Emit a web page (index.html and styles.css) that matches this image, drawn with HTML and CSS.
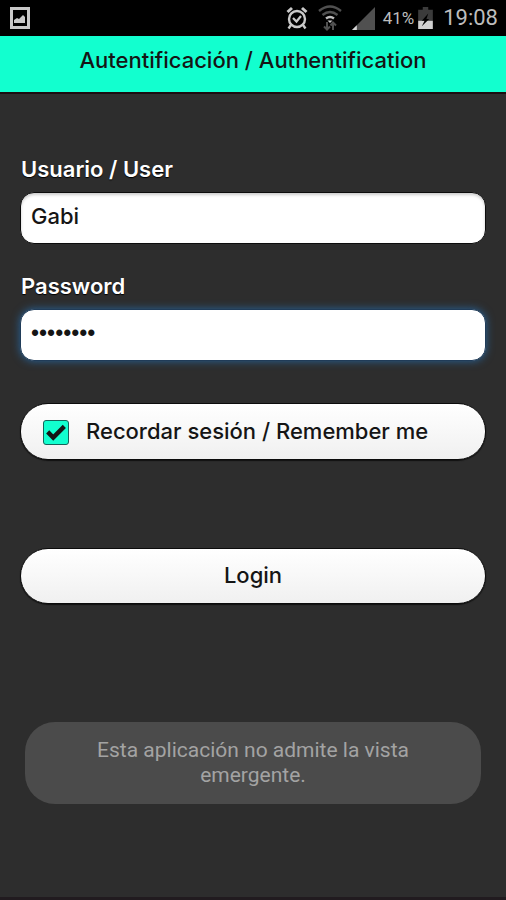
FILE: index.html
```html
<!DOCTYPE html>
<html lang="es">
<head>
<meta charset="utf-8">
<meta name="viewport" content="width=device-width, initial-scale=1">
<title>Autentificación / Authentification</title>
<link rel="stylesheet" href="styles.css">
</head>
<body>
<div class="statusbar">
  <svg class="icon-picture" width="20" height="22" viewBox="0 0 20 22" aria-hidden="true">
    <path fill="#c9c9c9" fill-rule="evenodd" d="M0 0h20v22H0zM3 3v16h14V3z"/>
    <path fill="#c9c9c9" d="M4 16v-3l3-2 2 1 4-4 2 2v6z"/>
  </svg>
  <div class="indicators">
    <svg width="22" height="24" viewBox="0 0 22 24" fill="none" stroke="#c9c9c9" aria-hidden="true">
      <circle cx="11" cy="13" r="8" stroke-width="2.4"/>
      <path stroke-width="2.2" d="M7 12l3.500 3.500L15 10"/>
      <path stroke-width="3" d="M1.500 6L6 2M16 2l4.500 4"/>
      <path stroke-width="2.400" d="M5 19l-2.500 3.500M17 19l2.500 3.500"/>
    </svg>
    <svg width="24" height="26" viewBox="0 0 24 26" fill="none" stroke="#505050" aria-hidden="true">
      <path stroke-width="2.400" d="M1 6Q12-3 23 6"/>
      <path stroke-width="2.400" d="M4.500 10Q12 4 19.500 10"/>
      <path stroke="#bbb" stroke-width="2.400" d="M8 13.500q4-3 8 0"/>
      <path fill="#c9c9c9" stroke="none" d="M9.500 15.500h5L12 18z"/>
      <path stroke-width="2" d="M9 17v8M6 21.500l3 3 3-3M15 25v-8M12.500 20.500L15 17.500l3 3"/>
    </svg>
    <svg width="23" height="23" viewBox="0 0 24 24" aria-hidden="true">
      <path fill="#505050" d="M24 0v24H0z"/>
      <path fill="#d8d8d8" d="M5 19v5H0z"/>
    </svg>
    <span class="battery">
      <span class="percent">41%</span>
      <svg width="15" height="22" viewBox="0 0 16 24" aria-hidden="true">
        <path fill="#3b3b3b" d="M5 0h6v3h5v12H0V3h5z"/>
        <path fill="#d0d0d0" d="M0 15h16v9H0z"/>
        <path fill="#000" d="M11 7l-7 8h3l-3 6 8-8H9z"/>
      </svg>
    </span>
    <span class="clock">19:08</span>
  </div>
</div>
<header class="titlebar"><h1>Autentificación / Authentification</h1></header>
<main>
  <form class="login">
    <label class="caption" for="user">Usuario / User</label>
    <input class="field" id="user" type="text" value="Gabi">
    <label class="caption" for="password">Password</label>
    <input class="field field-active" id="password" type="password" value="12345678">
    <label class="pill remember">
      <span class="tick">
        <input type="checkbox" checked>
        <svg width="20" height="17" viewBox="0 0 18 15" fill="none" stroke="#151515" stroke-width="4" aria-hidden="true"><path d="M1.500 7l5 5L16.500 2"/></svg>
      </span>
      <span>Recordar sesión / Remember me</span>
    </label>
    <button class="pill submit" type="button">Login</button>
  </form>
  <div class="toast" role="status">Esta aplicación no admite la vista emergente.</div>
</main>
</body>
</html>
```
FILE: styles.css
```css
* {
  box-sizing: border-box;
}

body {
  margin: 0;
  min-height: 100vh;
  display: flex;
  flex-direction: column;
  background: #2d2d2d;
  border-bottom: 3px solid #211b1f;
  color: #151515;
  font: 500 22px/28px Inter, sans-serif;
}

.statusbar {
  display: flex;
  justify-content: space-between;
  align-items: center;
  height: 36px;
  padding: 0 8px 0 10px;
  background: #000;
  color: #bdbdbd;
  font-family: Roboto, sans-serif;
  font-weight: 400;
}

.indicators {
  display: flex;
  align-items: center;
  gap: 10px;
}

.battery {
  display: flex;
  align-items: center;
  gap: 4px;
  margin-left: -2px;
}

.percent {
  font-size: 17px;
}

.clock {
  font-size: 22px;
}

.titlebar {
  height: 58px;
  padding: 10px 16px;
  background: #12ffcf;
  border-bottom: 2px solid #1b0d10;
  text-align: center;
}

h1 {
  margin: 0;
  font: inherit;
}

main {
  padding: 61px 20px;
}

.login {
  display: flex;
  flex-direction: column;
}

.caption {
  padding: 0 1px;
  margin-bottom: 9px;
  color: #fff;
  font-weight: 600;
  text-shadow: 0 1px 1px #000;
}

.field {
  width: 100%;
  height: 52px;
  margin: 0 0 28px;
  padding: 0 10px 4px;
  border: 1px solid #0c0c0c;
  border-radius: 14px;
  background: #fff;
  box-shadow: inset 0 2px 3px #ccc;
  color: inherit;
  font: inherit;
  outline: 0;
}

.field-active {
  margin-bottom: 42px;
  border-color: #203c59;
  box-shadow: 0 0 9px #27639a;
  font-family: "Liberation Sans", sans-serif;
  font-size: 23px;
}

.pill {
  height: 57px;
  padding: 0 22px 2px;
  border: 1px solid #0c0c0c;
  border-radius: 28px;
  background: linear-gradient(#fff, #f0f0f0);
  box-shadow: 0 1px 1px #111;
  color: inherit;
  font: inherit;
}

.remember {
  display: flex;
  align-items: center;
  gap: 17px;
  margin-bottom: 88px;
}

.tick {
  display: grid;
  place-items: center;
  margin-top: 3px;
}

.tick > * {
  grid-area: 1 / 1;
}

.tick input {
  appearance: none;
  width: 26px;
  height: 25px;
  margin: 0;
  border: 1px solid #15645a;
  border-radius: 3px;
  background: #12ffcf;
}

.tick svg {
  pointer-events: none;
}

.submit {
  height: 56px;
}

.toast {
  margin: 118px 5px 0;
  padding: 16px 64px;
  border-radius: 30px;
  background: #4b4b4b;
  color: #a3a3a3;
  font: 400 21px/25px Roboto, sans-serif;
  text-align: center;
}
```
